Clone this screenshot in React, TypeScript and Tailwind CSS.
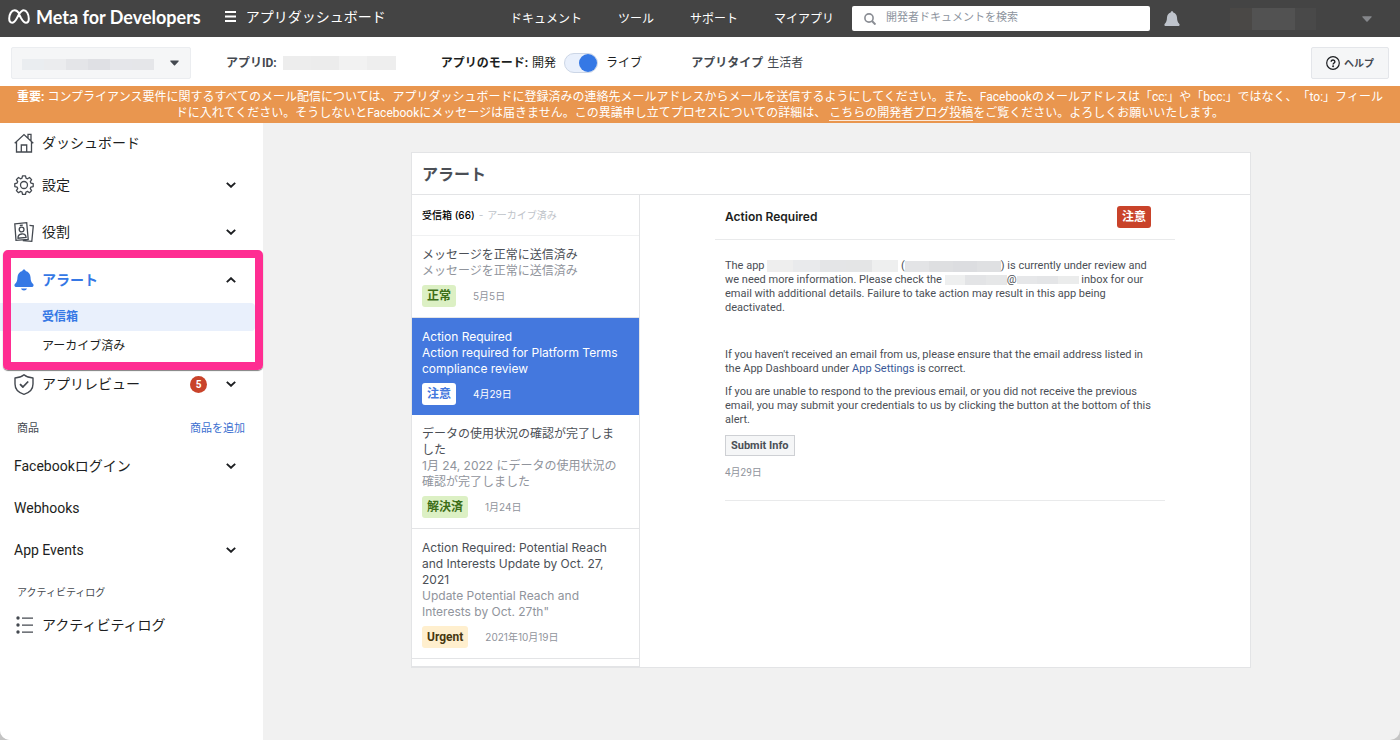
import React, { useState } from 'react';
import clsx from 'clsx';

type IconProps = { className?: string };

const MetaLogo = ({ className }: IconProps) => (
  <svg viewBox="0 0 22 15" className={className} fill="none" stroke="currentColor" strokeWidth="2">
    <path d="M11 4.2C9.6 2.1 8.2 1.2 6.6 1.2 3.4 1.2 1.2 5.5 1.2 9.6c0 2.600 1 4.100 2.900 4.100 1.800 0 2.900-1.300 4.900-4.800L11 5.300c1.700-2.800 3-4.100 4.700-4.100 3 0 5.100 4.300 5.100 8.500 0 2.500-1 4-2.800 4-1.800 0-2.900-1.200-5-4.800L11 5.200" />
  </svg>
);

const HomeIcon = ({ className }: IconProps) => (
  <svg viewBox="0 0 20 20" className={className} fill="none" stroke="currentColor" strokeWidth="1.3">
    <path d="M0.700 10.300 10 1.600l9.300 8.700M2.500 9v10h15V9M14 5V1.300h3v6.500M7.300 19v-7h5.400v7" />
  </svg>
);

const GearIcon = ({ className }: IconProps) => (
  <svg viewBox="0 0 20 20" className={className} fill="none" stroke="currentColor" strokeWidth="1.3" strokeLinejoin="round">
    <circle cx="10" cy="10" r="3.500" />
    <path d="M8.500 0.900h3l.5 2.300 1.500.6 2-1.300 2.100 2.100-1.300 2 .6 1.500 2.300.5v3l-2.300.5-.6 1.500 1.300 2-2.100 2.100-2-1.300-1.500.6-.5 2.300h-3L8 17l-1.500-.6-2 1.300-2.100-2.100 1.300-2L3.100 12.100.8 11.600v-3l2.300-.5.6-1.500-1.300-2 2.100-2.100 2 1.300L8 3.200z" />
  </svg>
);

const RolesIcon = ({ className }: IconProps) => (
  <svg viewBox="0 0 20 20" className={className} fill="none" stroke="currentColor" strokeWidth="1.300">
    <path d="M.8 1.800 12.700.7l1.500 16.600-12.200 1.100zM15.500 3.400l3.800.4-1.500 15.500-9-.7" />
    <circle cx="7.600" cy="7.500" r="2.400" />
    <path d="M4 16.200c-.2-3 1.500-4 3.800-4.200s4 .7 4.300 3.500z" />
    <path d="M5.800 3.500l3-.3" />
  </svg>
);

const SolidBell = ({ className }: IconProps) => (
  <svg viewBox="0 0 20 22" className={className} fill="currentColor">
    <path d="M10 .5c.9 0 1.500.6 1.600 1.400 2.900.7 4.700 3 4.900 6.100.2 3.800.7 5.400 2.600 7.100.9.900.5 2.900-.8 2.900H1.700c-1.300 0-1.700-2-.8-2.900 1.900-1.700 2.400-3.300 2.600-7.100.2-3.100 2-5.400 4.900-6.100C8.500 1.100 9.100.5 10 .5zM7 19.500h6c-.4 1.200-1.500 2-3 2s-2.600-.8-3-2z" />
  </svg>
);

const HeaderBell = ({ className }: IconProps) => (
  <svg viewBox="0 0 16 16" className={className} fill="currentColor">
    <path d="M8 .3c.7 0 1.200.5 1.300 1.200 2.500.8 3.500 2.700 3.700 5 .2 3.300.6 4.800 2.400 6.500.4.500.2 2-.6 2H1.200c-.8 0-1-1.500-.6-2C2.400 11.300 2.800 9.800 3 6.500c.2-2.300 1.200-4.200 3.700-5C6.800.8 7.300.3 8 .3z" />
  </svg>
);

const ShieldIcon = ({ className }: IconProps) => (
  <svg viewBox="0 0 20 21" className={className} fill="none" stroke="currentColor" strokeWidth="1.400" strokeLinejoin="round">
    <path d="M10 .8c2.300 2 5.500 3.100 9 3.200v6c0 5-3.500 8.700-9 10.300C4.500 18.700 1 15 1 10V4c3.500-.1 6.700-1.200 9-3.200z" />
    <path d="M6 10.200l2.900 2.800 5.300-5.500" strokeWidth="1.800" />
  </svg>
);

const ListIcon = ({ className }: IconProps) => (
  <svg viewBox="0 0 18 18" className={className} fill="currentColor">
    <circle cx="2" cy="2" r="1.700" />
    <circle cx="2" cy="9" r="1.700" />
    <circle cx="2" cy="16" r="1.700" />
    <path d="M6 1.400h11v1.300H6zM6 8.400h11v1.300H6zM6 15.400h11v1.300H6z" />
  </svg>
);

const Chevron = ({ up }: { up?: boolean }) => (
  <svg viewBox="0 0 10 6" className={clsx('h-[6px] w-[10px] shrink-0', up && 'rotate-180')} fill="none" stroke="#1c1e21" strokeWidth="1.900">
    <path d="M.8.9 5 4.800 9.200.9" />
  </svg>
);

const Caret = ({ className }: IconProps) => (
  <svg viewBox="0 0 10 6" className={className} fill="currentColor">
    <path d="M1 .3h8c.7 0 .9.600.5 1L5.600 5.500c-.3.300-.9.300-1.200 0L.5 1.300C.1.900.3.300 1 .3z" />
  </svg>
);

const SearchIcon = ({ className }: IconProps) => (
  <svg viewBox="0 0 12 12" className={className} fill="none" stroke="currentColor" strokeWidth="1.600">
    <circle cx="5" cy="5" r="4.100" />
    <path d="M8 8l3.500 3.600" strokeWidth="2" />
  </svg>
);

const HelpIcon = ({ className }: IconProps) => (
  <svg viewBox="0 0 14 14" className={className} fill="none" stroke="currentColor" strokeWidth="1.200">
    <circle cx="7" cy="7" r="6.300" />
    <path d="M5.200 5.700c0-2.400 3.700-2.300 3.700 0 0 1.300-1.800 1.300-1.800 2.700" strokeWidth="1.400" />
    <circle cx="7.100" cy="10.300" r=".4" />
  </svg>
);

const navLinks = ['ドキュメント', 'ツール', 'サポート', 'マイアプリ'];

const alerts = [
  {
    title: 'メッセージを正常に送信済み',
    body: 'メッセージを正常に送信済み',
    status: '正常',
    date: '5月5日',
    badge: 'bg-[#dcf0c4] text-[#3c6e17]'
  },
  {
    title: 'Action Required',
    body: 'Action required for Platform Terms compliance review',
    status: '注意',
    date: '4月29日',
    badge: 'bg-white text-[#4478de]'
  },
  {
    title: 'データの使用状況の確認が完了しました',
    body: '1月 24, 2022 にデータの使用状況の確認が完了しました',
    status: '解決済',
    date: '1月24日',
    badge: 'bg-[#dcf0c4] text-[#3c6e17]'
  },
  {
    title: 'Action Required: Potential Reach and Interests Update by Oct. 27, 2021',
    body: 'Update Potential Reach and Interests by Oct. 27th"',
    status: 'Urgent',
    date: '2021年10月19日',
    badge: 'bg-[#ffefce] text-[#463710]'
  }
];

const Redacted = ({ colors, className }: { colors: string[]; className: string }) => (
  <span aria-hidden="true" className={clsx('inline-flex shrink-0', className)}>
    {colors.map((color, i) => (
      <span key={i} className={clsx('flex-1', color)} />
    ))}
  </span>
);

const Header = () => (
  <header className="flex h-[37px] items-center bg-[#444444] pl-2 text-white">
    <div className="flex items-center gap-6 pb-1 whitespace-nowrap">
      <a href="#" className="flex items-center gap-[6px]">
        <MetaLogo className="h-[15px] w-[22px]" />
        <span className="font-[Lato,sans-serif] text-[18px] leading-5 font-bold">Meta for Developers</span>
      </a>
      <button className="flex items-center gap-[10px] text-[14px] leading-5">
        <svg viewBox="0 0 11 11" className="h-[11px] w-[11px]" fill="currentColor">
          <path d="M0 0h11v2H0zM0 4.500h11v2H0zM0 9h11v2H0z" />
        </svg>
        アプリダッシュボード
      </button>
    </div>
    <nav className="ml-auto flex gap-9 text-[12px] whitespace-nowrap">
      {navLinks.map(link => (
        <a key={link} href="#">{link}</a>
      ))}
    </nav>
    <label className="ml-[18px] flex h-[25px] w-[298px] items-center gap-[10px] rounded-[2px] bg-white pl-3">
      <SearchIcon className="h-3 w-3 shrink-0 text-[#8a8d94]" />
      <input
        type="text"
        aria-label="開発者ドキュメントを検索"
        placeholder="開発者ドキュメントを検索"
        className="w-full text-[11px] text-gray-700 outline-none placeholder:text-[#8d949e]"
      />
    </label>
    <button aria-label="お知らせ" className="ml-[14px]">
      <HeaderBell className="h-4 w-4 text-[#bec3cb]" />
    </button>
    <button aria-label="アカウント" className="flex items-center pr-7 pl-[50px]">
      <Redacted colors={['bg-[#4a4846]', 'bg-[#525252]', 'bg-[#525252]', 'bg-[#494949]']} className="h-[22px] w-[86px]" />
      <Caret className="ml-[46px] h-[6px] w-[10px] text-[#85878b]" />
    </button>
  </header>
);

const AppBar = () => {
  const [live, setLive] = useState(true);

  return (
    <div className="flex h-[49px] items-center bg-white px-[11px] pt-[3px] text-[12px] whitespace-nowrap text-[#444950]">
      <div className="relative">
        <select
          aria-label="アプリ"
          className="block h-8 w-[180px] appearance-none rounded-[2px] border border-[#ebedf0] bg-[#f5f6f7]"
        >
          <option value="" />
        </select>
        <Redacted
          colors={['bg-[#eaedf0]', 'bg-[#ebecee]', 'bg-[#e4e5e8]', 'bg-[#dfe0e4]', 'bg-[#e5e6ea]', 'bg-[#e5e6e9]']}
          className="pointer-events-none absolute top-3 left-[11px] h-[11px] w-[132px]"
        />
        <Caret className="pointer-events-none absolute top-[13px] right-3 h-[6px] w-[9px] text-[#444950]" />
      </div>
      <div className="ml-[35px] flex items-center gap-[6px]">
        <b>アプリID:</b>
        <Redacted colors={['bg-[#ededed]', 'bg-[#ececec]', 'bg-[#f2f2f2]', 'bg-[#eeeeee]']} className="h-[14px] w-[113px]" />
      </div>
      <label className="ml-[45px] flex items-center text-[#1c1e21]">
        <b>アプリのモード:</b>
        <span className="ml-1">開発</span>
        <input
          type="checkbox"
          checked={live}
          onChange={e => setLive(e.target.checked)}
          className="mx-2 flex h-5 w-[34px] appearance-none items-center rounded-full border border-[#ccd6e6] bg-[#e9f0fc] before:size-[18px] before:rounded-full before:bg-[#90949c] checked:justify-end checked:before:bg-[#3578e5]"
        />
        <span>ライブ</span>
      </label>
      <div className="ml-[49px] flex gap-1">
        <b>アプリタイプ</b>
        <span>生活者</span>
      </div>
      <button className="ml-auto flex h-8 items-center gap-1 rounded-[2px] border border-[#e4e6ea] bg-[#f5f6f7] px-[14px] text-[10px] font-bold text-[#444950]">
        <HelpIcon className="h-[14px] w-[14px] text-[#1c1e21]" />
        ヘルプ
      </button>
    </div>
  );
};

const Banner = () => (
  <div className="bg-[#e9964f] pt-[3px] pb-[2px] text-center text-[12px] leading-4 text-white [text-spacing-trim:space-all]">
    <b>重要:</b>{' '}
    コンプライアンス要件に関するすべてのメール配信については、アプリダッシュボードに登録済みの連絡先メールアドレスからメールを送信するようにしてください。また、Facebookのメールアドレスは「cc:」や「bcc:」ではなく、「to:」フィール
    <br />
    ドに入れてください。そうしないとFacebookにメッセージは届きません。この異議申し立てプロセスについての詳細は、{' '}
    <a href="#" className="border-b border-white/80">こちらの開発者ブログ投稿</a>
    をご覧ください。よろしくお願いいたします。
  </div>
);

const navRow = 'flex w-full items-center pr-[27px] text-left text-[14px] text-[#1c1e21]';

const Sidebar = () => {
  const [open, setOpen] = useState(true);

  return (
    <aside className="w-[263px] shrink-0 bg-white whitespace-nowrap">
      <a href="#" className={clsx(navRow, 'h-10 gap-2 pl-[14px]')}>
        <HomeIcon className="h-5 w-5 text-[#444950]" />
        ダッシュボード
      </a>
      <button className={clsx(navRow, 'h-11 gap-2 pl-[14px]')}>
        <GearIcon className="h-5 w-5 text-[#444950]" />
        <span className="flex-1">設定</span>
        <Chevron />
      </button>
      <button className={clsx(navRow, 'h-[50px] gap-2 pl-[14px]')}>
        <RolesIcon className="h-5 w-5 text-[#444950]" />
        <span className="flex-1">役割</span>
        <Chevron />
      </button>
      <div className="relative">
        <button onClick={() => setOpen(!open)} className={clsx(navRow, 'h-[46px] gap-2 pl-[14px]')}>
          <SolidBell className="h-[22px] w-5 text-[#3578e5]" />
          <span className="flex-1 font-bold text-[#3578e5]">アラート</span>
          <Chevron up={open} />
        </button>
        {open && (
          <div className="text-[12px] text-[#1c1e21]">
            <a href="#" className="mr-2 flex h-7 items-center rounded-r bg-[#e9f0fc] pl-[42px] font-bold text-[#3578e5]">
              受信箱
            </a>
            <a href="#" className="flex h-[29px] items-center pl-[42px]">アーカイブ済み</a>
          </div>
        )}
        <div className="pointer-events-none absolute -top-[7px] right-0 -bottom-[10px] left-[3px] rounded-[5px] border-8 border-[#ff2d92] shadow-[0_1px_1px_rgba(0,0,0,0.5)]" />
      </div>
      <button className={clsx(navRow, 'h-12 gap-2 pl-[14px]')}>
        <ShieldIcon className="h-[21px] w-5 text-[#444950]" />
        <span className="flex-1">アプリレビュー</span>
        <span className="mr-[11px] flex size-[17px] items-center justify-center rounded-full bg-[#c9432a] text-[10px] font-bold text-white">
          5
        </span>
        <Chevron />
      </button>
      <div className="flex h-[37px] items-center justify-between pt-1 pr-[18px] pl-[17px] text-[11px] leading-4 text-[#444950]">
        <span>商品</span>
        <a href="#" className="text-[#3b6fd0]">商品を追加</a>
      </div>
      <button className={clsx(navRow, 'h-[42px] pl-[14px]')}>
        <span className="flex-1">Facebookログイン</span>
        <Chevron />
      </button>
      <a href="#" className={clsx(navRow, 'h-[42px] pl-[14px]')}>Webhooks</a>
      <button className={clsx(navRow, 'h-[42px] pl-[14px]')}>
        <span className="flex-1">App Events</span>
        <Chevron />
      </button>
      <div className="flex h-[43px] items-center pl-[17px] text-[10px] text-[#444950]">アクティビティログ</div>
      <a href="#" className={clsx(navRow, 'h-[22px] gap-2 pl-4')}>
        <ListIcon className="h-[18px] w-[18px] text-[#444950]" />
        アクティビティログ
      </a>
    </aside>
  );
};

const AlertList = () => {
  const [selected, setSelected] = useState(1);

  return (
    <div className="w-[228px] shrink-0 border-r border-[#e3e4e6]">
      <div className="flex h-[41px] items-center gap-1 border-b border-[#f0f1f2] px-[10px] text-[10px] text-[#bec3c9]">
        <a href="#" className="font-medium text-black">受信箱 (66)</a>
        <span>-</span>
        <a href="#">アーカイブ済み</a>
      </div>
      <ul>
        {alerts.map((alert, i) => (
          <li key={alert.date} className={clsx(i !== selected && 'border-b border-[#e3e4e6]')}>
            <button
              onClick={() => setSelected(i)}
              className={clsx(
                'block w-full pt-[11px] pr-4 pb-[10px] pl-[10px] text-left text-[12px] leading-4',
                i === selected ? 'bg-[#4478de] text-white' : 'text-[#4b4f56]'
              )}
            >
              <span className="block">{alert.title}</span>
              <span className={clsx('block', i !== selected && 'text-[#90949c]')}>{alert.body}</span>
              <span className="mt-[6px] flex items-center gap-[17px]">
                <span className={clsx("rounded-[3px] px-[5px] py-[3px] font-[Roboto,'Noto_Sans_CJK_JP',sans-serif] font-bold", alert.badge)}>
                  {alert.status}
                </span>
                <span className={clsx('text-[10px]', i !== selected && 'text-[#90949c]')}>{alert.date}</span>
              </span>
            </button>
          </li>
        ))}
      </ul>
      <div className="h-2 border-b border-[#e3e4e6]" />
    </div>
  );
};

const AlertDetail = () => (
  <article className="mx-auto w-full max-w-[460px] font-[Roboto,'Noto_Sans_CJK_JP',sans-serif] text-[11px] leading-[14px] text-[#4b4f56]">
    <div className="flex h-[45px] items-center justify-between border-b border-[#e9eaeb] pr-6 pl-[10px]">
      <h2 className="font-[Inter,sans-serif] text-[12px] font-semibold text-[#1c1e21]">Action Required</h2>
      <span className="rounded-[3px] bg-[#c9432a] px-[5px] py-1 text-[12px] font-bold text-white">注意</span>
    </div>
    <div className="px-[10px] pt-[19px]">
      <p>
        The app{' '}
        <Redacted colors={['bg-[#eeeeee]', 'bg-[#e9eaec]', 'bg-[#e4e5e7]', 'bg-[#e4e5e6]', 'bg-[#eeefef]']} className="h-3 w-[131px] align-middle" />
        {' '}(
        <Redacted colors={['bg-[#e3e4e6]', 'bg-[#dedfe1]', 'bg-[#dcdde0]', 'bg-[#dfe0e2]']} className="h-[11px] w-[96px] align-middle" />
        ) is currently under review and
        <br />
        we need more information. Please check the{' '}
        <Redacted colors={['bg-[#eeefef]', 'bg-[#e3e4e6]', 'bg-[#e6e7e8]']} className="h-[10px] w-[62px] align-middle" />
        @
        <Redacted colors={['bg-[#e6e7e9]', 'bg-[#e4e5e7]', 'bg-[#ebecec]']} className="h-2 w-[62px] align-middle" />
        {' '}inbox for our
        <br />
        email with additional details. Failure to take action may result in this app being
        <br />
        deactivated.
      </p>
      <p className="mt-[33px]">
        If you haven't received an email from us, please ensure that the email address listed in
        <br />
        the App Dashboard under <a href="#" className="text-[#385898]">App Settings</a> is correct.
      </p>
      <p className="mt-[9px]">
        If you are unable to respond to the previous email, or you did not receive the previous
        <br />
        email, you may submit your credentials to us by clicking the button at the bottom of this
        <br />
        alert.
      </p>
      <button className="mt-2 block h-[21px] border border-[#ced0d4] bg-[#f5f6f7] px-[5px] font-bold text-[#4b4f56]">
        Submit Info
      </button>
      <div className="mt-[10px] border-b border-[#e9eaeb] pb-5 text-[10px] text-[#90949c]">4月29日</div>
    </div>
  </article>
);

export default function App() {
  return (
    <div className="bg-[#c4c4c4]">
      <div className="flex min-h-screen flex-col overflow-hidden rounded-b-[10px] bg-[#f1f1f1] font-[Roboto,'Noto_Sans_CJK_JP',sans-serif]">
        <Header />
        <AppBar />
        <Banner />
        <div className="flex flex-1">
          <Sidebar />
          <main className="flex-1 pt-[29px] pr-[25px] pb-10 pl-6">
            <section className="mx-auto max-w-[840px] border border-[#e3e4e6] bg-white font-[Inter,'Noto_Sans_CJK_JP',sans-serif]">
              <h1 className="flex h-[42px] items-center border-b border-[#e3e4e6] px-[10px] text-[16px] font-bold text-[#4b4f56]">
                アラート
              </h1>
              <div className="flex">
                <AlertList />
                <AlertDetail />
              </div>
            </section>
          </main>
        </div>
      </div>
    </div>
  );
}
